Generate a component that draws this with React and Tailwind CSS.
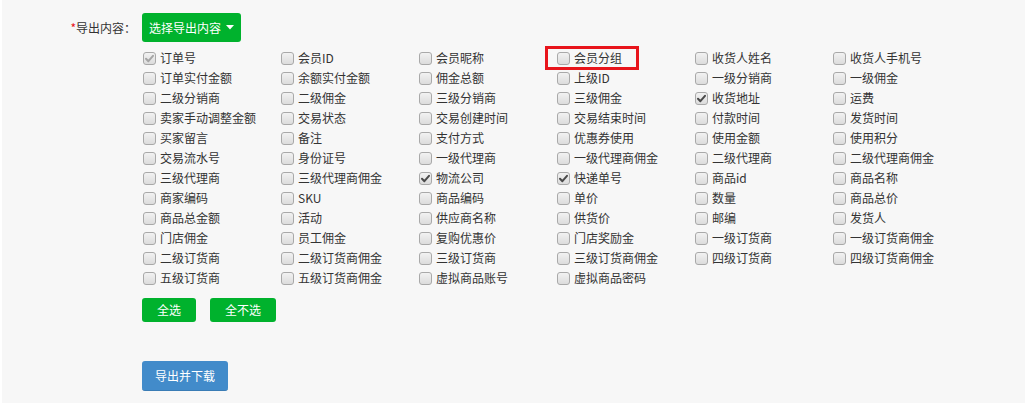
import React from "react";

const rows = [
  ["订单号", "会员ID", "会员昵称", "会员分组", "收货人姓名", "收货人手机号"],
  ["订单实付金额", "余额实付金额", "佣金总额", "上级ID", "一级分销商", "一级佣金"],
  ["二级分销商", "二级佣金", "三级分销商", "三级佣金", "收货地址", "运费"],
  ["卖家手动调整金额", "交易状态", "交易创建时间", "交易结束时间", "付款时间", "发货时间"],
  ["买家留言", "备注", "支付方式", "优惠券使用", "使用金额", "使用积分"],
  ["交易流水号", "身份证号", "一级代理商", "一级代理商佣金", "二级代理商", "二级代理商佣金"],
  ["三级代理商", "三级代理商佣金", "物流公司", "快递单号", "商品id", "商品名称"],
  ["商家编码", "SKU", "商品编码", "单价", "数量", "商品总价"],
  ["商品总金额", "活动", "供应商名称", "供货价", "邮编", "发货人"],
  ["门店佣金", "员工佣金", "复购优惠价", "门店奖励金", "一级订货商", "一级订货商佣金"],
  ["二级订货商", "二级订货商佣金", "三级订货商", "三级订货商佣金", "四级订货商", "四级订货商佣金"],
  ["五级订货商", "五级订货商佣金", "虚拟商品账号", "虚拟商品密码"],
];

const checked = new Set(["订单号", "收货地址", "物流公司", "快递单号"]);

function Box({ on, disabled }) {
  return (
    <span className="relative inline-block w-[13px] h-[13px] shrink-0 rounded-[3px] border border-[#a9a9a9] bg-gradient-to-b from-[#f2f2f2] to-[#dcdcdc]">
      {on && (
        <svg viewBox="0 0 13 13" className="absolute left-[-1px] top-[-1px] w-[13px] h-[13px]">
          <path
            d="M3 6.8 L5.4 9.2 L10 3.8"
            fill="none"
            stroke={disabled ? "#a5a5a5" : "#4a4a4a"}
            strokeWidth="2"
            strokeLinecap="round"
            strokeLinejoin="round"
          />
        </svg>
      )}
    </span>
  );
}

function Item({ label }) {
  const on = checked.has(label);
  const disabled = label === "订单号";
  return (
    <div className="relative flex items-center h-[20px] pl-[1px]">
      {label === "会员分组" && (
        <span className="absolute left-[-11px] top-[-2px] w-[94px] h-[24px] border-[3px] border-[#e8141b]" />
      )}
      <Box on={on} disabled={disabled} />
      <span className="ml-[4px] text-[12px] leading-[20px] text-[#333] whitespace-nowrap">{label}</span>
    </div>
  );
}

export default function App() {
  return (
    <div className="w-[1025px] h-[418px] bg-white" style={{ fontFamily: '"Noto Sans CJK SC", "Noto Sans", sans-serif' }}>
      <div className="ml-[2px] h-[403px] bg-[#f7f7f7] flex pt-[13px]">
        <div className="w-[140px] shrink-0 flex justify-end pr-[6px] h-[29px] items-center">
          <span className="text-[12px] text-[#333]">
            <span className="text-[#e8141b]">*</span>导出内容：
          </span>
        </div>
        <div className="flex flex-col">
          <div>
            <button className="h-[29px] px-[7px] rounded-[3px] bg-[#00b22d] text-white text-[12px] flex items-center gap-[5px]">
              选择导出内容
              <svg width="8" height="5" viewBox="0 0 8 5"><path d="M0 0 H8 L4 4.5 Z" fill="#fff" /></svg>
            </button>
          </div>
          <div className="mt-[6px] grid grid-cols-[138px_138px_138px_138px_138px_138px]">
            {rows.flat().map((l) => (
              <Item key={l} label={l} />
            ))}
          </div>
          <div className="mt-[10px] flex gap-[14px]">
            <button className="w-[54px] h-[24px] rounded-[3px] bg-[#00b22d] text-white text-[12px]">全选</button>
            <button className="w-[66px] h-[24px] rounded-[3px] bg-[#00b22d] text-white text-[12px]">全不选</button>
          </div>
          <div className="mt-[39px]">
            <button className="w-[86px] h-[30px] rounded-[3px] bg-[#428bca] border-b border-[#3a7cb5] text-white text-[12px]">导出并下载</button>
          </div>
        </div>
      </div>
    </div>
  );
}
